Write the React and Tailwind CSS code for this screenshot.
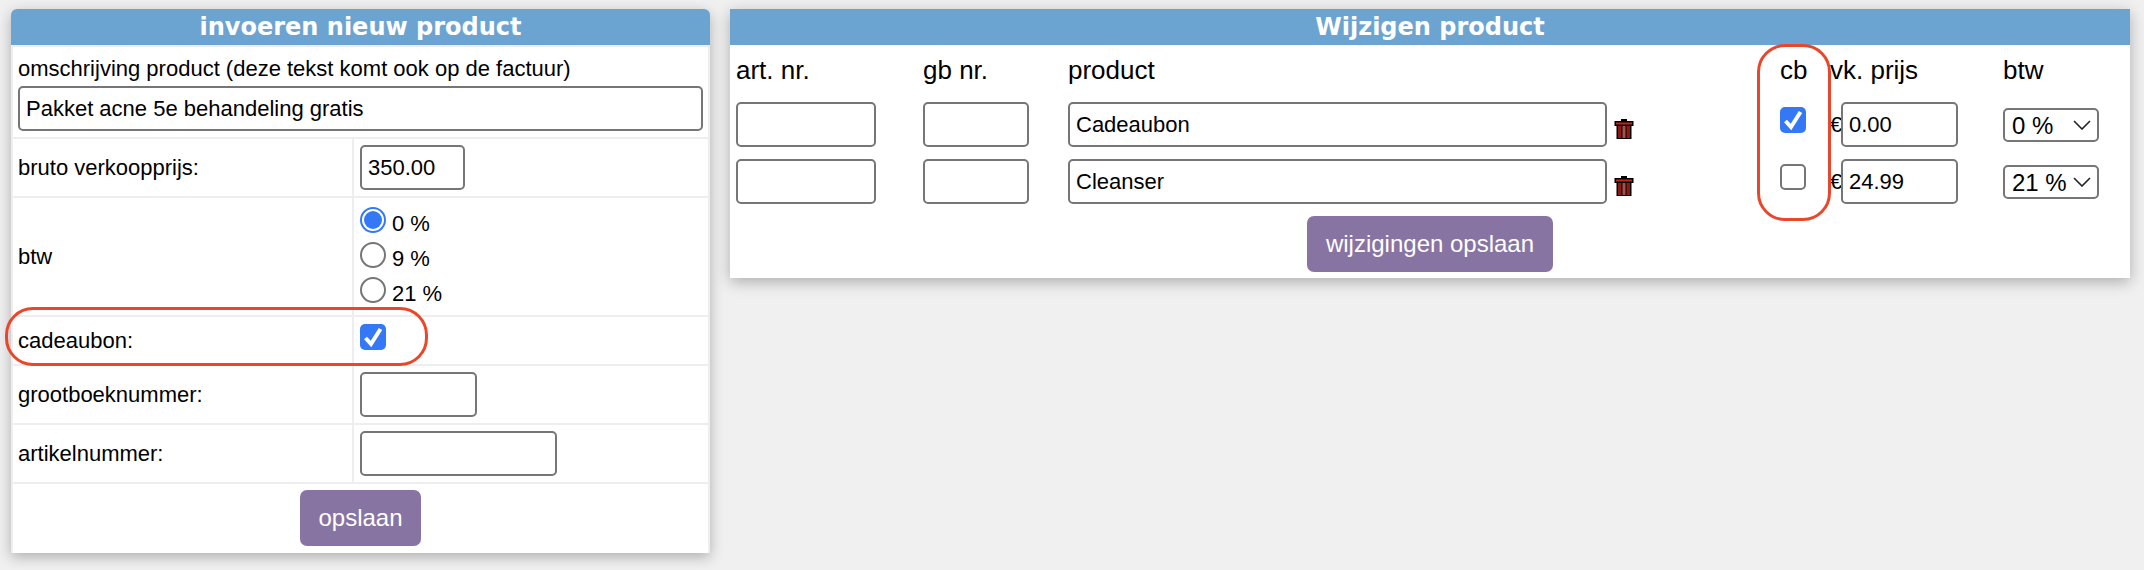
import React from 'react';

const fieldClass = 'h-[45px] border-2 border-[#767676] rounded-[5px] bg-white px-[6px] text-[22px] text-black outline-none';

const Field = ({ value = '', className = '' }) => (
  <input type="text" defaultValue={value} className={`${fieldClass} ${className}`} />
);

const Checkbox = ({ checked }) => (
  <span className={`flex w-[26px] h-[26px] items-center justify-center rounded-[5px] ${checked ? 'bg-[#3478f6]' : 'bg-white border-2 border-[#767676]'}`}>
    {checked && (
      <svg width="26" height="26" viewBox="0 0 26 26" fill="none">
        <path d="M5.5 14 L11 20 L20.5 5" stroke="white" strokeWidth="4" />
      </svg>
    )}
  </span>
);

const Radio = ({ checked, label }) => (
  <label className="flex items-start h-[35px] text-[22px]">
    {checked ? (
      <span className="flex w-[26px] h-[26px] items-center justify-center rounded-full border-2 border-[#3478f6] bg-white">
        <span className="w-[18px] h-[18px] rounded-full bg-[#3478f6]" />
      </span>
    ) : (
      <span className="w-[26px] h-[26px] rounded-full border-2 border-[#767676] bg-white" />
    )}
    <span className="ml-[6px] mt-[3px] leading-[28px]">{label}</span>
  </label>
);

const Trash = () => (
  <svg width="20" height="20" viewBox="0 0 20 20" className="shrink-0">
    <rect x="7" y="0" width="6" height="3" fill="#000" />
    <rect x="0.5" y="2" width="19" height="5" fill="#000" />
    <rect x="2" y="3.5" width="16" height="2" fill="#c0281c" />
    <rect x="2.5" y="7" width="15" height="13" fill="#000" />
    <rect x="4" y="7" width="3.5" height="12" fill="#8c1a12" />
    <rect x="8.5" y="7" width="3" height="12" fill="#a5524e" />
    <rect x="12.5" y="7" width="3.5" height="12" fill="#8c1a12" />
  </svg>
);

const Select = ({ value }) => (
  <div className="relative w-[96px] h-[34px] border-2 border-[#767676] rounded-[5px] bg-white">
    <select defaultValue={value} className="appearance-none w-full h-full pl-[7px] text-[24px] leading-[30px] outline-none">
      <option>0 %</option>
      <option>9 %</option>
      <option>21 %</option>
    </select>
    <svg width="18" height="10" viewBox="0 0 18 10" fill="none" className="absolute right-[6px] top-[10px] pointer-events-none">
      <path d="M1 1 L9 9 L17 1" stroke="#222" strokeWidth="1.6" />
    </svg>
  </div>
);

const PanelHeader = ({ title, rounded }) => (
  <div className={`h-[36px] bg-[#6ca4d1] text-white text-center font-bold text-[24px] leading-[36px] font-['DejaVu_Sans',sans-serif] ${rounded ? 'rounded-t-[6px]' : ''}`}>
    {title}
  </div>
);

const FormRow = ({ label, children, height }) => (
  <div className={`flex gap-[2px] ${height}`}>
    <div className="w-[339px] bg-white flex items-center pl-[5px]">{label}</div>
    <div className="flex-1 bg-white flex items-center pl-[6px]">{children}</div>
  </div>
);

const ProductRow = ({ product, cb, price, btw }) => (
  <>
    <Field className="w-[140px]" />
    <Field className="w-[106px]" />
    <div className="flex items-start">
      <Field value={product} className="w-[539px]" />
      <div className="ml-[7px] mt-[17px]"><Trash /></div>
    </div>
    <div className="pt-[5px]"><Checkbox checked={cb} /></div>
    <div className="flex items-center">
      <span className="w-[11px] overflow-hidden">€</span>
      <Field value={price} className="w-[117px]" />
    </div>
    <div className="pt-[6px]"><Select value={btw} /></div>
  </>
);

const App = () => {
  const columns = 'grid grid-cols-[187px_145px_712px_50px_173px_1fr]';

  return (
    <div className="h-[570px] bg-[#f0f0f0] overflow-hidden font-['Liberation_Sans',sans-serif] text-black text-[22px]">
      <div className="relative flex items-start gap-[20px] pt-[9px] pl-[11px]">
        {/* invoeren */}
        <div className="w-[699px] rounded-t-[6px] bg-[#eeeeee] shadow-[0_4px_14px_rgba(0,0,0,0.28)]">
          <PanelHeader title="invoeren nieuw product" rounded />
          <div className="flex flex-col gap-[2px] pt-[2px] px-[2px]">
            <div className="h-[90px] bg-white px-[5px]">
              <div className="h-[39px] pt-[7px] leading-[30px]">omschrijving product (deze tekst komt ook op de factuur)</div>
              <Field value="Pakket acne 5e behandeling gratis" className="w-[685px]" />
            </div>
            <FormRow label="bruto verkoopprijs:" height="h-[57px]">
              <Field value="350.00" className="w-[105px]" />
            </FormRow>
            <FormRow label="btw" height="h-[117px]">
              <div className="pt-[6px]">
                <Radio checked label="0 %" />
                <Radio label="9 %" />
                <Radio label="21 %" />
              </div>
            </FormRow>
            <FormRow label="cadeaubon:" height="h-[47px]">
              <div className="-mt-[8px]"><Checkbox checked /></div>
            </FormRow>
            <FormRow label="grootboeknummer:" height="h-[57px]">
              <Field className="w-[117px]" />
            </FormRow>
            <FormRow label="artikelnummer:" height="h-[57px]">
              <Field className="w-[197px]" />
            </FormRow>
            <div className="h-[69px] bg-white flex justify-center pt-[6px]">
              <button className="w-[121px] h-[56px] rounded-[7px] bg-[#8874a3] text-white text-[24px]">opslaan</button>
            </div>
          </div>
        </div>

        {/* wijzigen */}
        <div className="w-[1400px] h-[269px] bg-white shadow-[0_4px_14px_rgba(0,0,0,0.28)]">
          <PanelHeader title="Wijzigen product" />
          <div className="px-[6px]">
            <div className={`${columns} h-[57px] items-center text-[26px] pb-[10px] pt-[4px]`}>
              <span>art. nr.</span>
              <span>gb nr.</span>
              <span>product</span>
              <span>cb</span>
              <span>vk. prijs</span>
              <span>btw</span>
            </div>
            <div className={`${columns} gap-y-[12px] items-start`}>
              <ProductRow product="Cadeaubon" cb price="0.00" btw="0 %" />
              <ProductRow product="Cleanser" price="24.99" btw="21 %" />
            </div>
            <div className="flex justify-center pt-[12px]">
              <button className="w-[246px] h-[56px] rounded-[7px] bg-[#8874a3] text-white text-[24px]">wijzigingen opslaan</button>
            </div>
          </div>
        </div>

        {/* markeringen */}
        <div className="absolute left-[5px] top-[307px] w-[423px] h-[59px] border-[3px] border-[#e8472b] rounded-[28px] pointer-events-none" />
        <div className="absolute left-[1757px] top-[44px] w-[74px] h-[177px] border-[3px] border-[#e8472b] rounded-[28px] pointer-events-none" />
      </div>
    </div>
  );
};

export default App;
